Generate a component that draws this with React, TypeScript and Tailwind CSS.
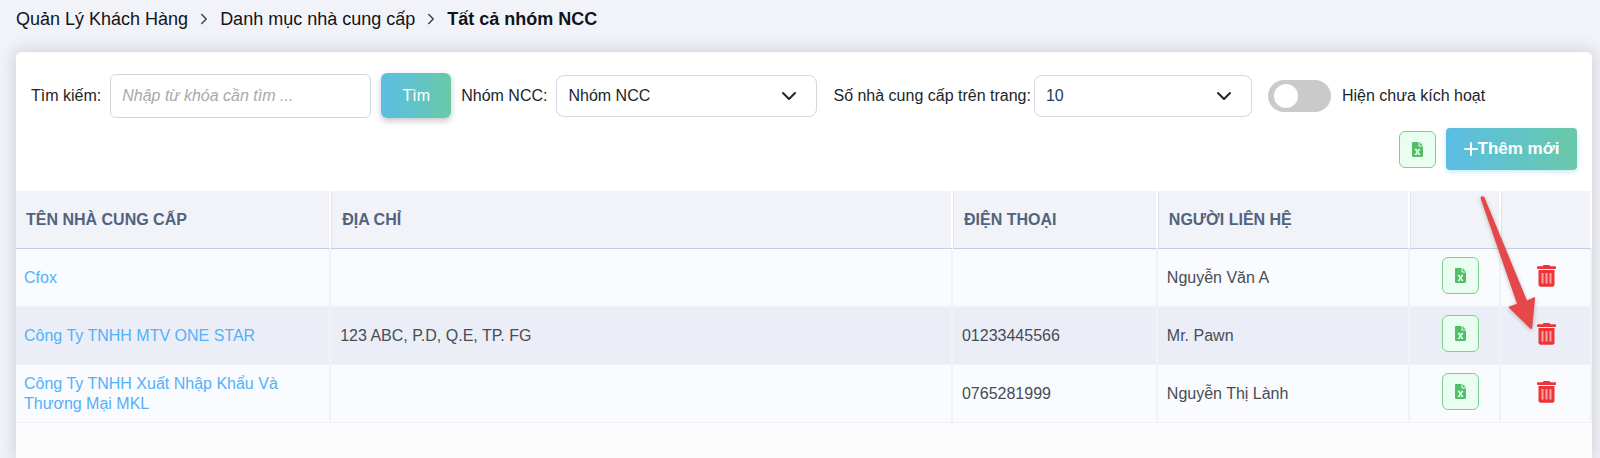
import { useState } from 'react'
import { ChevronDown, ChevronRight } from 'lucide-react'

type Supplier = {
  id: number
  name: string
  address: string
  phone: string
  contact: string
}

const SUPPLIERS: Supplier[] = [
  { id: 1, name: 'Cfox', address: '', phone: '', contact: 'Nguyễn Văn A' },
  { id: 2, name: 'Công Ty TNHH MTV ONE STAR', address: '123 ABC, P.D, Q.E, TP. FG', phone: '01233445566', contact: 'Mr. Pawn' },
  { id: 3, name: 'Công Ty TNHH Xuất Nhập Khẩu Và Thương Mại MKL', address: '', phone: '0765281999', contact: 'Nguyễn Thị Lành' },
]

const TH = 'border-r-2 border-white px-[11px] text-left font-bold shadow-[inset_1px_0_0_#dfe5ef]'
const TD = 'border-r-2 border-b border-[#f0f2f6] px-[9px]'
const SELECT = 'h-[42px] w-full appearance-none rounded-lg border border-[#d3d8df] bg-white pl-[11px] pr-10'

function ExcelButton() {
  return (
    <button type="button" aria-label="Xuất Excel" className="flex size-[37px] items-center justify-center rounded-md border border-[#7dd18d] bg-[#e9fdf1]">
      <svg width="11" height="15" viewBox="0 0 11 15" fill="none">
        <path d="M1.2 0H6.500v3.800c0 .4.3.7.7.7H11v9.300c0 .7-.5 1.200-1.200 1.200H1.200C.5 15 0 14.500 0 13.800V1.200C0 .5.5 0 1.200 0Z" fill="#52be68" />
        <path d="M7.500 0 11 3.500H7.500Z" fill="#52be68" />
        <path d="M3.600 7.200 7.400 12.600M7.400 7.200 3.600 12.600" stroke="#e9fdf1" strokeWidth="1.500" />
        <path d="M2.800 7.300h1.900M6.300 7.300h1.900M2.800 12.500h1.900M6.300 12.500h1.900" stroke="#e9fdf1" strokeWidth="1" />
      </svg>
    </button>
  )
}

function TrashIcon() {
  return (
    <svg width="19" height="22" viewBox="0 0 19 22" fill="none">
      <path d="M5.5 1.200C6 .4 6.600 0 7.500 0h4c.9 0 1.500.4 2 1.200h4.700c.5 0 .8.4.8.9v1.100c0 .5-.3.8-.8.8H.8C.3 4 0 3.700 0 3.200V2.100c0-.5.3-.9.8-.9Z" fill="#ec3439" />
      <path d="M1.5 5h16v14.500c0 1.300-.9 2.200-2.100 2.200H3.600c-1.200 0-2.100-.9-2.100-2.200Z" fill="#ec3439" />
      <path d="M5.500 8v10.500M9.500 8v10.500M13.500 8v10.500" stroke="#f7a3a6" strokeWidth="2" />
    </svg>
  )
}

export default function App() {
  const [keyword, setKeyword] = useState('')
  const [inactive, setInactive] = useState(false)

  return (
    <div className="flex min-h-screen flex-col bg-[#f2f3f8] pl-4 pr-2 font-['Liberation_Sans',Arial,sans-serif] text-[16px] text-[#212529]">
      <nav className="flex h-[52px] items-start gap-[7px] pt-1.5 text-[18px] leading-[26px] text-[#111418]">
        <a href="#">Quản Lý Khách Hàng</a>
        <ChevronRight size={18} className="mt-1 text-[#3c4650]" />
        <a href="#">Danh mục nhà cung cấp</a>
        <ChevronRight size={18} className="mt-1 text-[#3c4650]" />
        <span className="font-bold">Tất cả nhóm NCC</span>
      </nav>

      <main className="flex-1 rounded-t-md bg-[#fcfcfd] shadow-[0_0_16px_2px_rgba(70,75,95,0.2)]">
        <div className="rounded-t-md bg-white px-[15px] pt-[21px] pb-[21px]">
          <div className="flex h-[45px] items-center">
            <label htmlFor="keyword" className="mr-[9px]">Tìm kiếm:</label>
            <input
              id="keyword"
              value={keyword}
              onChange={e => setKeyword(e.target.value)}
              placeholder="Nhập từ khóa cần tìm ..."
              className="h-11 w-[261px] rounded-md border border-[#d0d5dc] px-[11px] placeholder:italic placeholder:text-[#a9a9a9]"
            />
            <button type="button" className="ml-2.5 h-[45px] w-[70px] rounded-md bg-linear-to-r from-[#5bbde4] to-[#69c9a8] text-white shadow-[0_3px_6px_rgba(0,0,0,0.22)]">
              Tìm
            </button>
            <label htmlFor="group" className="ml-2.5 mr-[9px]">Nhóm NCC:</label>
            <div className="relative w-[261px]">
              <select id="group" className={SELECT}>
                <option>Nhóm NCC</option>
              </select>
              <ChevronDown size={24} className="pointer-events-none absolute top-[9px] right-4" />
            </div>
            <label htmlFor="page-size" className="ml-4 mr-[3px]">Số nhà cung cấp trên trang:</label>
            <div className="relative w-[218px]">
              <select id="page-size" className={`${SELECT} text-[#1f3a68]`}>
                <option>10</option>
                <option>20</option>
              </select>
              <ChevronDown size={24} className="pointer-events-none absolute top-[9px] right-4" />
            </div>
            <label className="ml-4 flex items-center gap-[11px]">
              <input type="checkbox" checked={inactive} onChange={e => setInactive(e.target.checked)} className="peer sr-only" />
              <span className="flex h-8 w-[63px] items-center rounded-full bg-[#cacaca] px-1.5 peer-checked:justify-end peer-checked:bg-[#5bbde4]">
                <span className="size-6 rounded-full bg-white" />
              </span>
              Hiện chưa kích hoạt
            </label>
          </div>
          <div className="mt-2.5 flex items-center justify-end gap-2.5">
            <ExcelButton />
            <button type="button" className="flex h-[42px] w-[131px] items-center justify-center rounded-sm bg-linear-to-r from-[#5bbde4] to-[#69c9a8] text-[17px] font-bold text-white shadow-[0_2px_5px_rgba(91,189,228,0.35)]">
              <svg width="14" height="14" viewBox="0 0 14 14" stroke="currentColor" strokeWidth="2" strokeLinecap="round">
                <path d="M7 1v12M1 7h12" />
              </svg>
              Thêm mới
            </button>
          </div>
        </div>

        <div className="relative">
          <table className="w-full table-fixed border-separate border-spacing-0 text-[#464d55]">
            <colgroup>
              <col className="w-[20%]" />
              <col />
              <col className="w-[13%]" />
              <col className="w-[16%]" />
              <col className="w-[91px]" />
              <col className="w-[91px]" />
            </colgroup>
            <thead>
              <tr className="h-[58px] bg-[#f2f3f8] text-[#506380] *:border-b *:border-b-[#c3cfe0]">
                <th className="border-r-2 border-white px-2.5 text-left">TÊN NHÀ CUNG CẤP</th>
                <th className={TH}>ĐỊA CHỈ</th>
                <th className={TH}>ĐIỆN THOẠI</th>
                <th className={TH}>NGƯỜI LIÊN HỆ</th>
                <th className={TH} aria-label="Excel" />
                <th className={TH} aria-label="Xóa" />
              </tr>
            </thead>
            <tbody>
              {SUPPLIERS.map(s => (
                <tr key={s.id} className="h-[58px] bg-[#fafbfe] leading-5 even:bg-[#ebeef7]">
                  <td className="border-r-2 border-b border-[#f0f2f6] px-2">
                    <a href="#" className="text-[#54b0f8]">{s.name}</a>
                  </td>
                  <td className={TD}>{s.address}</td>
                  <td className={TD}>{s.phone}</td>
                  <td className={TD}>{s.contact}</td>
                  <td className={TD}>
                    <div className="-mt-1 flex justify-center pl-3"><ExcelButton /></div>
                  </td>
                  <td className={TD}>
                    <div className="-mt-1 flex justify-center pl-0.5">
                      <button type="button" aria-label="Xóa"><TrashIcon /></button>
                    </div>
                  </td>
                </tr>
              ))}
            </tbody>
          </table>

          {/* arrow pointing at the delete button of the second row */}
          <svg
            className="pointer-events-none absolute top-1 right-[57px] drop-shadow-[0_1px_2px_rgba(0,0,0,0.25)]"
            width="62" height="140" viewBox="0 0 62 140" fill="#e5484b"
          >
            <path d="M7.600 2.600C8 1 10.500.6 11.400 2.200L54 105.500 61 102.200c.6-.2 1.200.2 1.100.8L59.200 133c-.1 1-1.200 1.300-2 .6L36.100 113c-.6-.6-.5-1.300.3-1.600L44 108.800 7.800 4C7.600 3.500 7.500 3 7.600 2.600Z" />
          </svg>
        </div>
      </main>
    </div>
  )
}
